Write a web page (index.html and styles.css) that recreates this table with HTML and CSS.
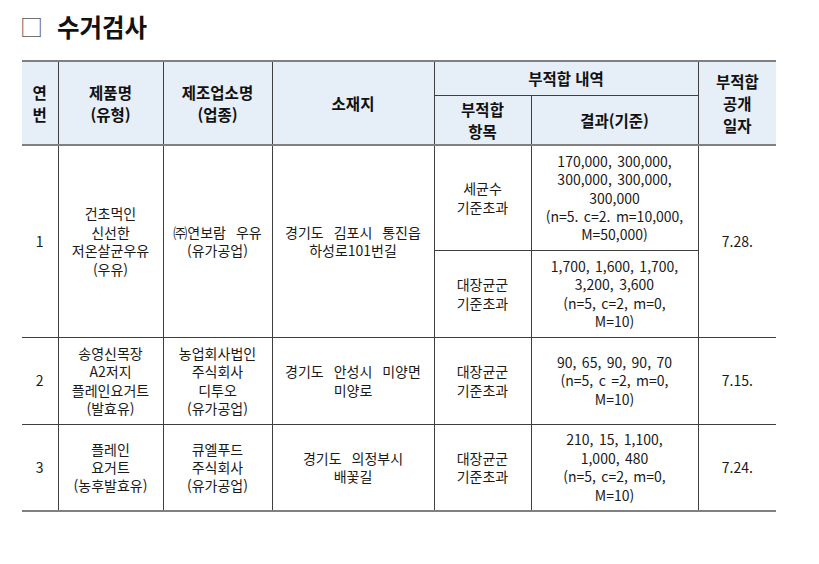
FILE: index.html
```html
<!DOCTYPE html>
<html lang="ko">
<head>
<meta charset="utf-8">
<title>수거검사</title>
<link rel="stylesheet" href="styles.css">
</head>
<body>
<div class="page">
  <h1 class="title"><span class="mark">□</span><span class="title-text">수거검사</span></h1>
  <table class="grid">
    <colgroup>
      <col class="c1"><col class="c2"><col class="c3"><col class="c4"><col class="c5"><col class="c6"><col class="c7">
    </colgroup>
    <thead>
      <tr class="h1">
        <th rowspan="2" class="first">연<br>번</th>
        <th rowspan="2">제품명<br>(유형)</th>
        <th rowspan="2">제조업소명<br>(업종)</th>
        <th rowspan="2">소재지</th>
        <th colspan="2">부적합 내역</th>
        <th rowspan="2" class="last">부적합<br>공개<br>일자</th>
      </tr>
      <tr class="h2">
        <th>부적합<br>항목</th>
        <th>결과(기준)</th>
      </tr>
    </thead>
    <tbody>
      <tr class="r1a">
        <td rowspan="2" class="first num">1</td>
        <td rowspan="2">건초먹인<br>신선한<br>저온살균우유<br>(우유)</td>
        <td rowspan="2">㈜연보람 우유<br>(유가공업)</td>
        <td rowspan="2">경기도 김포시 통진읍<br>하성로101번길</td>
        <td>세균수<br>기준초과</td>
        <td class="num">170,000, 300,000,<br>300,000, 300,000,<br>300,000<br>(n=5. c=2. m=10,000,<br>M=50,000)</td>
        <td rowspan="2" class="last num">7.28.</td>
      </tr>
      <tr class="r1b">
        <td>대장균군<br>기준초과</td>
        <td class="num">1,700, 1,600, 1,700,<br>3,200, 3,600<br>(n=5, c=2, m=0,<br>M=10)</td>
      </tr>
      <tr class="r2">
        <td class="first num">2</td>
        <td>송영신목장<br>A2저지<br>플레인요거트<br>(발효유)</td>
        <td>농업회사법인<br>주식회사<br>디투오<br>(유가공업)</td>
        <td>경기도 안성시 미양면<br>미양로</td>
        <td>대장균군<br>기준초과</td>
        <td class="num">90, 65, 90, 90, 70<br>(n=5, c&nbsp;=2, m=0,<br>M=10)</td>
        <td class="last num">7.15.</td>
      </tr>
      <tr class="r3">
        <td class="first num">3</td>
        <td>플레인<br>요거트<br>(농후발효유)</td>
        <td>큐엘푸드<br>주식회사<br>(유가공업)</td>
        <td>경기도 의정부시<br>배꽃길</td>
        <td>대장균군<br>기준초과</td>
        <td class="num">210, 15, 1,100,<br>1,000, 480<br>(n=5, c=2, m=0,<br>M=10)</td>
        <td class="last num">7.24.</td>
      </tr>
    </tbody>
  </table>
</div>
</body>
</html>
```
FILE: styles.css
```css
html, body {
  margin: 0;
  padding: 0;
  background: #ffffff;
}
body {
  font-family: "Noto Sans CJK KR", "Noto Sans", sans-serif;
  color: #1a1a1a;
}
.page {
  padding: 10px 0 0 22px;
}
.title {
  display: flex;
  align-items: center;
  margin: 0 0 18px 0;
  height: 32px;
  font-size: 24.5px;
  font-weight: 700;
  color: #111;
}
.mark {
  font-weight: 400;
  font-size: 23px;
  color: #555;
  margin-left: -2px;
  margin-right: 14px;
  line-height: 1;
}
.grid {
  border-collapse: collapse;
  table-layout: fixed;
  width: 754px;
  border-top: 2px solid #808080;
  border-bottom: 2px solid #808080;
}
.c1 { width: 36px; }
.c2 { width: 105px; }
.c3 { width: 109px; }
.c4 { width: 162px; }
.c5 { width: 97px; }
.c6 { width: 167px; }
.c7 { width: 78px; }
.grid th, .grid td {
  border: 1px solid #3f3f3f;
  text-align: center;
  vertical-align: middle;
  padding: 0 1px;
  white-space: nowrap;
}
.grid th {
  background: #e6eef8;
  font-weight: 700;
  font-size: 15.5px;
  line-height: 22px;
  color: #111;
}
.grid thead tr.h2 th,
.grid thead th[rowspan] {
  border-bottom: 2px solid #808080;
}
.grid td {
  font-size: 14px;
  line-height: 18.4px;
  word-spacing: 6px;
}
.grid td.num {
  word-spacing: 1.5px;
}
.grid .first { border-left: none; }
.grid .last { border-right: none; }
.h1 { height: 34px; }
.h2 { height: 50px; }
.r1a { height: 105px; }
.r1b { height: 87px; }
.r2 { height: 87px; }
.r3 { height: 87px; }
```
